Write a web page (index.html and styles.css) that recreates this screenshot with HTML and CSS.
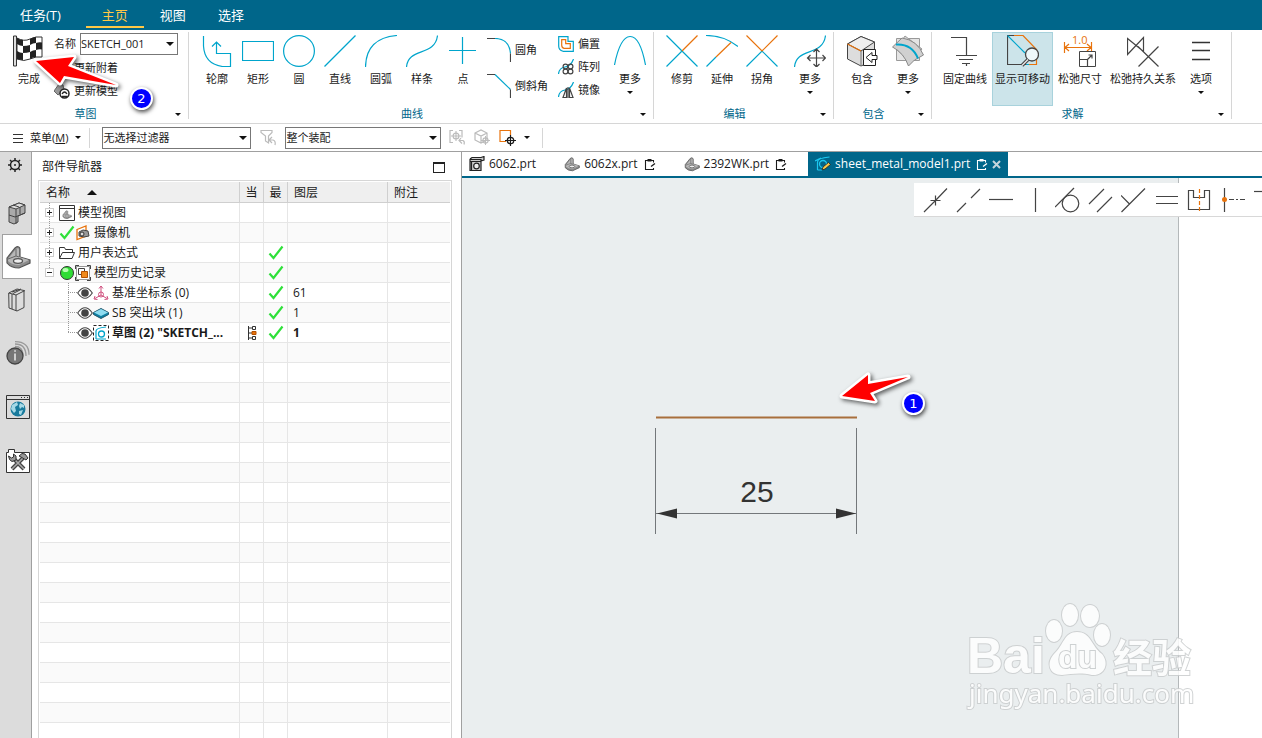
FILE: index.html
```html
<!DOCTYPE html>
<html lang="zh-CN">
<head>
  <meta charset="UTF-8" />
  <title>sheet_metal_model1.prt</title>
  <link rel="stylesheet" href="styles.css">
</head>
<body>
  <!-- shared icons -->
  <svg class="defs" width="0" height="0">
    <symbol id="check" viewBox="0 0 16 16"><path d="M1.500 8.500l4 4.500L14.500 1.500" fill="none" stroke="#2fe03a" stroke-width="2.200"/></symbol>
    <symbol id="eye" viewBox="0 0 16 16"><path d="M.7 8q7.300-10.500 14.600 0q-7.300 10.500-14.600 0z" fill="#fff" stroke="#444" stroke-width="1.100"/><circle cx="8" cy="8" r="3.800" fill="#444"/></symbol>
    <symbol id="part" viewBox="0 0 26 24"><path d="M2 13L10 3q4-3 5 1v8l10 3v3L14 23q-8 0-12-5z" fill="#8c8c8c" stroke="#555" stroke-width="1.200"/><path d="M3 14L11 4q3-2 3 1v7l10 3-10 5q-7 0-11-4z" fill="#b8b8b8"/><path d="M3 14l8-3 3 1M11 11V4" fill="none" stroke="#666"/><ellipse cx="13" cy="16" rx="4.500" ry="2.300" fill="#eee" stroke="#555" stroke-width="1.300"/></symbol>
    <symbol id="edit" viewBox="0 0 12 13"><path d="M9.500 4.500V2.500h-8v9h8V10" fill="none" stroke="currentColor" stroke-width="1.100"/><path d="M3.500 1h4v2.500h-4z" fill="currentColor"/><path d="M7 8.500l4-3" stroke="currentColor" stroke-width="1.300"/></symbol>
    <symbol id="target" viewBox="0 0 12 12"><circle cx="6" cy="6" r="3.500" fill="none" stroke="currentColor" stroke-width="1.400"/><path d="M6 0v12M0 6h12" stroke="currentColor" stroke-width="1.300"/></symbol>
  </svg>

  <nav class="menubar">
    <a href="#">任务(T)</a>
    <a href="#" class="active">主页</a>
    <a href="#">视图</a>
    <a href="#">选择</a>
  </nav>

  <header class="ribbon">
    <section class="group g-sketch">
      <div class="tools">
        <button class="tool">
          <svg width="32" height="32" viewBox="0 0 32 32">
            <path d="M.5 1h3v30h-3z" fill="#ddd" stroke="#333"/>
            <path d="M4 3q7 4 13 1t12-2v20q-6-1-12 2T4 24z" fill="#fff" stroke="#333"/>
            <path d="M4 3q3 2 6 2v6q-3 0-6-2zM17 4q3-2 6-2v6q-3 0-6 2zM10 11q4 0 7-1v7q-3 1-7 1zM23 8q3-1 6-.5v7q-3-.5-6 .5zM4 16q3 2 6 2v7q-3 0-6-1zM17 17q3-2 6-2v7q-3 0-6 2z" fill="#222"/>
          </svg>
          <span>完成</span>
        </button>
        <div class="stack sketch-stack">
          <div class="field">
            <label for="sketchName">名称</label>
            <span class="combo"><select id="sketchName"><option>SKETCH_001</option></select></span>
          </div>
          <button class="tool-row"><svg width="16" height="16" viewBox="0 0 16 16"><path d="M1 6l6-4 5 3v5l-6 3-5-3z" fill="#bbb" stroke="#444"/></svg>更新附着</button>
          <button class="tool-row"><svg width="16" height="16" viewBox="0 0 16 16"><path d="M0 8L5 1l4 1 1 5-6 5z" fill="#999" stroke="#666"/><circle cx="10.500" cy="10.500" r="4.500" fill="#fff" stroke="#222" stroke-width="1.500"/><path d="M8 11q2.500-4 5 0M8 13.500h5.500" fill="none" stroke="#222" stroke-width="1.300"/></svg>更新模型</button>
        </div>
      </div>
      <footer><span>草图</span><button class="caret" aria-label="草图"></button></footer>
    </section>

    <section class="group g-curve">
      <div class="tools">
        <button class="tool"><svg width="32" height="32" viewBox="0 0 32 32"><g class="cy"><path d="M2.500 1v10q1 18 19 20.500h8v-13h-14V7M11 11.500l4.500-4.500 4.500 4.500"/></g></svg><span>轮廓</span></button>
        <button class="tool"><svg width="32" height="32" viewBox="0 0 32 32"><path class="cy" d="M.5 6.500h31v19H.5z"/></svg><span>矩形</span></button>
        <button class="tool"><svg width="32" height="32" viewBox="0 0 32 32"><circle class="cy" cx="16" cy="16" r="15.400"/></svg><span>圆</span></button>
        <button class="tool"><svg width="32" height="32" viewBox="0 0 32 32"><path class="cy" d="M.5 31.500L31.500.5"/></svg><span>直线</span></button>
        <button class="tool"><svg width="32" height="32" viewBox="0 0 32 32"><path class="cy" d="M.5 32Q1 3 32 .5"/></svg><span>圆弧</span></button>
        <button class="tool"><svg width="32" height="32" viewBox="0 0 32 32"><path class="cy" d="M.5 32C2 12 29 22 31.500.5"/></svg><span>样条</span></button>
        <button class="tool"><svg width="32" height="32" viewBox="0 0 32 32"><path class="cy" d="M15.500 2v27M2 15.500h27"/></svg><span>点</span></button>
        <div class="stack tall">
          <button class="tool-row"><svg width="24" height="24" viewBox="0 0 24 24"><path class="cy" d="M8 .5q14 0 15.500 15"/><path class="ink" d="M0 .5h8M23.500 15.500V24"/></svg>圆角</button>
          <button class="tool-row"><svg width="24" height="24" viewBox="0 0 24 24"><path class="cy" d="M8 .5l15.500 15"/><path class="ink" d="M0 .5h8M23.500 15.500V24"/></svg>倒斜角</button>
        </div>
        <div class="stack">
          <button class="tool-row"><svg width="16" height="16" viewBox="0 0 16 16"><path class="cy" d="M.7.700h9.300v4.600h5.300v10H5Q.7 14 .7 10z"/><path class="or" d="M3.700 3.700h4v4h4.600v4.600H6q-2.300-.5-2.300-3z"/></svg>偏置</button>
          <button class="tool-row"><svg width="16" height="16" viewBox="0 0 16 16"><path class="cy" d="M.5 15Q1 9 7 8t8.500-8"/><g class="ink"><circle cx="7.500" cy="7.500" r="2.400"/><circle cx="12.500" cy="7.500" r="2.400"/><circle cx="7.500" cy="12.500" r="2.400"/><circle cx="12.500" cy="12.500" r="2.400"/></g></svg>阵列</button>
          <button class="tool-row"><svg width="16" height="16" viewBox="0 0 16 16"><path class="cy" d="M.5 15Q1 9 7 8t8.500-8"/><path class="ink" d="M8.500 6v9.500H5zM11.500 6v9.500h3.500zM10 5v11"/></svg>镜像</button>
        </div>
        <button class="tool more"><svg width="32" height="32" viewBox="0 0 32 32"><path class="cy" d="M.5 30Q6 2 16 1.500T31.500 30"/></svg><span>更多</span></button>
      </div>
      <footer><span>曲线</span><button class="caret" aria-label="曲线"></button></footer>
    </section>

    <section class="group g-edit">
      <div class="tools">
        <button class="tool"><svg width="32" height="32" viewBox="0 0 32 32"><path class="cy" d="M.5.500l31 31M.5 31.500L16 16"/><path class="or" d="M16 16L31.500.5"/></svg><span>修剪</span></button>
        <button class="tool"><svg width="32" height="32" viewBox="0 0 32 32"><path class="cy" d="M0 .5q18 0 32 11M.5 31.500L10 22"/><path class="or" d="M10 22L25 7.500"/></svg><span>延伸</span></button>
        <button class="tool"><svg width="32" height="32" viewBox="0 0 32 32"><path class="cy" d="M.5 31.500L16 16l15.500 15.500"/><path class="or" d="M.5.500L16 16 31.500.5"/></svg><span>拐角</span></button>
        <button class="tool more"><svg width="32" height="32" viewBox="0 0 32 32"><path class="cy" d="M.5 32C2 12 29 22 31.500.5"/><path class="ink" d="M22.500 14v18M13.500 23h18M19.500 17l3-3 3 3M19.500 29l3 3 3-3M16.500 20l-3 3 3 3M28.500 20l3 3-3 3"/></svg><span>更多</span></button>
      </div>
      <footer><span>编辑</span><button class="caret" aria-label="编辑"></button></footer>
    </section>

    <section class="group g-include">
      <div class="tools">
        <button class="tool"><svg width="32" height="32" viewBox="0 0 32 32"><path d="M1.500 9L15 1.500 28.500 7v18L15 31 1.500 24z" fill="#ddd" stroke="#444"/><path d="M1.500 9L15 1.500 28.500 7 15 16z" fill="#eee" stroke="#444"/><path d="M15 16v15" stroke="#777"/><path class="or" d="M1.500 9L15 16"/><path d="M17.500 14.500h12v16h-12z" fill="#fff" stroke="#222"/><path d="M31 20.500h-5v-3l-6 5 6 5v-3h5z" fill="#fff" stroke="#222"/></svg><span>包含</span></button>
        <button class="tool more"><svg width="32" height="32" viewBox="0 0 32 32"><path d="M4.500 3.500h23v22h-23z" fill="#e4e4e4" stroke="#999"/><path d="M13 1l17 13-11 13L4 14z" fill="#d8d8d8" stroke="#999"/><path d="M.5 12L10 3q15 2 21.500 17l-9 5-6 6Q12 18 .5 12z" fill="#d0d0d0" stroke="#888"/><path d="M4 9.500q16-1 22 14" fill="none" stroke="#00a5cc" stroke-width="2"/></svg><span>更多</span></button>
      </div>
      <footer><span>包含</span><button class="caret" aria-label="包含"></button></footer>
    </section>

    <section class="group g-solve">
      <div class="tools">
        <button class="tool"><svg width="32" height="32" viewBox="0 0 32 32"><path class="ink" d="M2 2.500h15.500v18M7 20.500h21M10 24.500h14M13 28.500h8M17.500 28v3"/></svg><span>固定曲线</span></button>
        <button class="tool selected"><svg width="32" height="32" viewBox="0 0 32 32"><path class="ink" d="M15 .5H.5v29H20"/><path class="cy" d="M.5.500L18 18M19 29.500h3"/><path class="or" d="M7 .5h9l13.500 14v15H22"/><circle cx="25" cy="19.500" r="6.500" fill="#eef8fa" stroke="#444" stroke-width="1.300"/><path d="M21 24.500l-6 6" stroke="#444" stroke-width="3.500"/><path d="M21 24.500l-6 6" stroke="#eee" stroke-width="1.300"/></svg><span>显示可移动</span></button>
        <button class="tool"><svg class="spill" width="32" height="32" viewBox="0 0 32 32"><path class="or" d="M.5 7v11M27.500 7v11M1 12.500h26M5 9l-4 3.500L5 16M23 9l4 3.500-4 3.500"/><text x="8" y="9" class="dim-text">1.0</text><path d="M15.500 16.500h16v15h-16z" fill="#fff" stroke="#444"/><path class="ink" d="M15.500 24.500h8v7M23 25l5-5M24.500 20H28v3.500"/></svg><span>松弛尺寸</span></button>
        <button class="tool"><svg width="32" height="32" viewBox="0 0 32 32"><path class="ink" d="M.5 19.500V3.500l16 13v-14zM11 11.500l20.500 20M11.500 31.500l20-20"/></svg><span>松弛持久关系</span></button>
        <button class="tool more"><svg width="32" height="32" viewBox="0 0 32 32"><path d="M7 7.500h18M7 15.500h18M7 24.500h18" stroke="#333" stroke-width="1.500"/></svg><span>选项</span></button>
      </div>
      <footer><span>求解</span><button class="caret" aria-label="求解"></button></footer>
    </section>
  </header>

  <div class="selection-bar">
    <button class="menu-btn"><svg width="10" height="10" viewBox="0 0 10 10"><path d="M0 1.500h10M0 5.500h10M0 9.500h10" stroke="#333"/></svg><span>菜单(<u>M</u>)</span><i class="arrow"></i></button>
    <span class="rule"></span>
    <span class="combo filter"><select aria-label="过滤器"><option>无选择过滤器</option></select></span>
    <button class="icon-btn wide" aria-label="重置过滤器"><svg width="17" height="17" viewBox="0 0 17 17"><path class="off" d="M1 1.500h11v2L8.500 7v7l-3-2V7L1 3.500zM12 8l-3 3 3 3M9 11h4q3 1 2 5"/></svg></button>
    <span class="combo scope"><select aria-label="范围"><option>整个装配</option></select></span>
    <div class="icons">
      <button class="icon-btn off-color" aria-label="捕捉"><svg width="17" height="17" viewBox="0 0 17 17"><path class="off" d="M4 1.500H1v12h3M10 1.500h3v7M12 9l-2 2.500 3 3M10 11.500h4q2 1 1 4"/><use href="#target" x="2" y="2" width="10" height="10"/></svg></button>
      <button class="icon-btn off-color" aria-label="实体"><svg width="17" height="17" viewBox="0 0 17 17"><path class="off" d="M1 4l6-3 6 3v7l-6 3-6-3zM1 4l6 3 6-3M7 7v7"/><use href="#target" x="7" y="7" width="9" height="9"/></svg></button>
      <button class="icon-btn" aria-label="选择方式"><svg width="17" height="17" viewBox="0 0 17 17"><path class="or" d="M7 12.500H1v-11h10.500V6"/><use href="#target" x="6" y="6" width="11" height="11"/></svg></button>
      <i class="arrow"></i>
    </div>
    <span class="rule"></span>
  </div>

  <main class="workspace">
    <aside class="rail">
      <button class="gear" aria-label="设置"><svg width="14" height="14" viewBox="0 0 14 14"><circle cx="7" cy="7" r="4.500" fill="none" stroke="#222" stroke-width="1.500"/><path d="M7 0v3M7 11v3M0 7h3M11 7h3M2 2l2 2M10 10l2 2M2 12l2-2M10 4l2-2" stroke="#222" stroke-width="1.500"/><circle cx="7" cy="7" r="1" fill="#222"/></svg></button>
      <button class="assembly" aria-label="装配导航器"><svg width="18" height="23" viewBox="0 0 18 23"><path d="M1 5l10-4 6 2v8l-7 3v6l-4 2-5-2z" fill="#aaa" stroke="#444"/><path d="M1 5l10-4 6 2-9 4z" fill="#ddd" stroke="#444"/><path d="M8 7v15M1 13l6 2 10-4M12 5v7M5 3l6 2" fill="none" stroke="#444"/></svg></button>
      <button class="current" aria-label="部件导航器"><svg width="26" height="24"><use href="#part"/></svg></button>
      <button aria-label="重用库"><svg width="18" height="24" viewBox="0 0 18 24"><path d="M.7 5L9 1l7 1.500v17L9 23l-8-3z" fill="#ddd" stroke="#444"/><path d="M1 5l7 2 9-4.500M8 7v16M4 6v15M4 4l9-3M5 5.500L12 2" fill="none" stroke="#444"/></svg></button>
      <button class="low first" aria-label="信息"><svg width="24" height="24" viewBox="0 0 24 24"><g fill="none" stroke="#999" stroke-width="1.300"><path d="M9 3q11 0 11 12M9 .7q14 0 14 13M9 5.500q8 0 8 9"/></g><circle cx="9" cy="15" r="8" fill="#777" stroke="#444" stroke-width="1.300"/><path d="M9 12.500v7M8.300 10h1.500" stroke="#eee" fill="none" stroke-width="1.500"/></svg></button>
      <button class="low" aria-label="浏览器"><svg width="24" height="24" viewBox="0 0 24 24"><path d="M.5.500h23v23H.5z" fill="#dcdcdc" stroke="#333"/><path d="M1 4.500h22" stroke="#333"/><path d="M15 2.500h7" stroke="#333" stroke-dasharray="1 2"/><circle cx="12" cy="14" r="7.500" fill="#187a9c"/><path d="M6 10l5-3 1 3-3 2 1 4-2 2-3-4zM14 8l4 2v3l-2-1-2 2-1-3zM13 16l4-1-2 5-2-1z" fill="#a5d8e6"/></svg></button>
      <button class="low" aria-label="工具"><svg width="24" height="24" viewBox="0 0 24 24"><path d="M.5 3.500h2v-3h6v3h15v20H.5z" fill="#fff" stroke="#333"/><path d="M7 9l11 11M17 9L6 20" stroke="#444" stroke-width="4"/><path d="M7 9l11 11M17 9L6 20" stroke="#aaa" stroke-width="1.500"/><path d="M2.500 7l3 2 2-1V5L10 7v4l-4 1.500q-3-1-3.500-5.500zM13 7l3-2.500 3 .5 3 4-2 2-5-3z" fill="#999" stroke="#333"/></svg></button>
    </aside>

    <section class="navigator">
      <div class="panel-title"><span>部件导航器</span><button aria-label="最大化"></button></div>
      <div class="tree">
        <table>
          <colgroup><col class="c-name"><col class="c-flag"><col class="c-flag"><col class="c-layer"><col></colgroup>
          <thead>
            <tr><th>名称 <i class="sort"></i></th><th class="flag">当</th><th class="flag">最</th><th>图层</th><th>附注</th></tr>
          </thead>
          <tbody>
            <tr><td><div class="node"><b class="box plus"></b><svg width="16" height="16" viewBox="0 0 16 16"><path d="M.5.500h15v15H.5zM1 3.500h14" fill="#fff" stroke="#333"/><use href="#part" x="3" y="5" width="10" height="9"/></svg>模型视图</div></td><td></td><td></td><td></td><td></td></tr>
            <tr><td><div class="node"><b class="box plus"></b><svg width="16" height="16"><use href="#check"/></svg><svg width="16" height="16" viewBox="0 0 16 16"><path d="M2 4.500L11 1v10l-9 3.500z" fill="#fff" stroke="#e8730c" stroke-width="1.300"/><path d="M4 7l4-2 5 1 1 5-5 1-5-1z" fill="#999" stroke="#444"/><circle cx="7" cy="9" r="2" fill="#ddd" stroke="#333"/></svg>摄像机</div></td><td></td><td></td><td></td><td></td></tr>
            <tr><td><div class="node"><b class="box plus"></b><svg width="16" height="16" viewBox="0 0 16 16"><path d="M.5 13.500v-11h5l1 2h7v3M.5 13.500l3-6h12l-2.500 6z" fill="#fff" stroke="#333"/></svg>用户表达式</div></td><td></td><td class="flag"><svg width="16" height="16"><use href="#check"/></svg></td><td></td><td></td></tr>
            <tr><td><div class="node last"><b class="box"></b><svg width="16" height="16" viewBox="0 0 16 16"><circle cx="8" cy="8" r="6.500" fill="#2fdc35" stroke="#333"/><ellipse cx="6.500" cy="5" rx="3" ry="2" fill="#b6ffb0"/></svg><svg width="16" height="16" viewBox="0 0 16 16"><path d="M1.500 1.500h13v13h-13z" fill="#fff" stroke="#999"/><path d="M.5 4V.5H4M12 .5h3.500V4M.5 12v3.500H4M12 15.500h3.500V12" fill="none" stroke="#444"/><path d="M3.500 3.500h6v6h-6z" fill="#fff" stroke="#444"/><path d="M6.500 6.500h6v6h-6z" fill="#f08a1d" stroke="#b35000"/></svg>模型历史记录</div></td><td></td><td class="flag"><svg width="16" height="16"><use href="#check"/></svg></td><td></td><td></td></tr>
            <tr><td><div class="node child"><svg width="16" height="16"><use href="#eye"/></svg><svg width="16" height="16" viewBox="0 0 16 16"><g fill="none" stroke="#d0517f"><path d="M8 10V1M6 3.500L8 1l2 2.500M8 10l-6 3.500M8 10l6 3.500M4.500 14.500L1 14l1-3M11.500 14.500L15 14l-1-3"/><circle cx="8" cy="9.500" r="2.500"/></g></svg>基准坐标系 (0)</div></td><td></td><td class="flag"><svg width="16" height="16"><use href="#check"/></svg></td><td>61</td><td></td></tr>
            <tr><td><div class="node child"><svg width="16" height="16"><use href="#eye"/></svg><svg width="16" height="16" viewBox="0 0 16 16"><path d="M.5 7.500v2L8 13.500l7.500-4v-2L8 3.500z" fill="#0d7fa3" stroke="#24566a"/><path d="M1 7.500l7-3.500 7 3.500-7 3.500z" fill="#8fdcf0"/></svg>SB 突出块 (1)</div></td><td></td><td class="flag"><svg width="16" height="16"><use href="#check"/></svg></td><td>1</td><td></td></tr>
            <tr class="bold"><td><div class="node child last"><svg width="16" height="16"><use href="#eye"/></svg><svg width="16" height="16" viewBox="0 0 16 16"><path d="M.5.500h15v15H.5z" fill="none" stroke="#222" stroke-dasharray="3 2"/><path d="M3 14V6q0-3 10-4M3 14h10" fill="none" stroke="#00a5cc" stroke-width="1.200"/><circle cx="8.500" cy="9" r="3" fill="none" stroke="#00a5cc" stroke-width="1.300"/></svg><span>草图 (2) "SKETCH_...</span></div></td><td class="flag"><svg width="10" height="16" viewBox="0 0 10 16"><path d="M1.500 1v14M1.500 3H5M1.500 8H5M1.500 13H5" stroke="#333" fill="none"/><path d="M5.500 1.500h3v3h-3zM5.500 11.500h3v3h-3z" fill="#fff" stroke="#333"/><path d="M5 6.500h4v3H5z" fill="#e8730c" stroke="#b35000"/></svg></td><td class="flag"><svg width="16" height="16"><use href="#check"/></svg></td><td>1</td><td></td></tr>
            <tr><td></td><td></td><td></td><td></td><td></td></tr>
            <tr><td></td><td></td><td></td><td></td><td></td></tr>
            <tr><td></td><td></td><td></td><td></td><td></td></tr>
            <tr><td></td><td></td><td></td><td></td><td></td></tr>
            <tr><td></td><td></td><td></td><td></td><td></td></tr>
            <tr><td></td><td></td><td></td><td></td><td></td></tr>
            <tr><td></td><td></td><td></td><td></td><td></td></tr>
            <tr><td></td><td></td><td></td><td></td><td></td></tr>
            <tr><td></td><td></td><td></td><td></td><td></td></tr>
            <tr><td></td><td></td><td></td><td></td><td></td></tr>
            <tr><td></td><td></td><td></td><td></td><td></td></tr>
            <tr><td></td><td></td><td></td><td></td><td></td></tr>
            <tr><td></td><td></td><td></td><td></td><td></td></tr>
            <tr><td></td><td></td><td></td><td></td><td></td></tr>
            <tr><td></td><td></td><td></td><td></td><td></td></tr>
            <tr><td></td><td></td><td></td><td></td><td></td></tr>
            <tr><td></td><td></td><td></td><td></td><td></td></tr>
            <tr><td></td><td></td><td></td><td></td><td></td></tr>
            <tr><td></td><td></td><td></td><td></td><td></td></tr>
            <tr><td></td><td></td><td></td><td></td><td></td></tr>
          </tbody>
        </table>
      </div>
    </section>

    <section class="editor">
      <div class="tabs">
        <button class="tab"><svg width="16" height="16" viewBox="0 0 16 16"><path d="M1 3.500h11v11H1zM1 5.500h11M2.500 5v9M1 3l2-1.500h9L15 .5V4l-3 1" fill="#ccc" stroke="#222" stroke-width="1.200"/><circle cx="7.500" cy="10" r="2.800" fill="#eee" stroke="#222" stroke-width="1.200"/></svg>6062.prt</button>
        <button class="tab"><svg width="16" height="16"><use href="#part"/></svg>6062x.prt<svg class="edit" width="12" height="13"><use href="#edit"/></svg></button>
        <button class="tab"><svg width="16" height="16"><use href="#part"/></svg>2392WK.prt<svg class="edit" width="12" height="13"><use href="#edit"/></svg></button>
        <button class="tab active"><svg width="16" height="16" viewBox="0 0 16 16"><path d="M2.500 14V6q0-4 12-5M0 5l6-3M2.500 14h5" fill="none" stroke="#1cc8f0" stroke-width="1.200"/><circle cx="8" cy="8" r="3.500" fill="none" stroke="#1cc8f0" stroke-width="1.300"/><path d="M7 14l1-3 5.500-4.500 2 2L10 13z" fill="#f7c948" stroke="#222" stroke-width=".8"/></svg>sheet_metal_model1.prt<svg class="edit" width="12" height="13"><use href="#edit"/></svg><svg width="9" height="9" viewBox="0 0 9 9"><path d="M1 1l7 7M8 1L1 8" stroke="#c5d5dc" stroke-width="2"/></svg></button>
      </div>

      <div class="viewport">
        <div class="model"></div>
        <div class="margin"></div>

        <div class="constraints">
          <button aria-label="重合"><svg width="26" height="26" viewBox="0 0 26 26"><path class="ink" d="M1 25L12.500 13.500M12.500 13.500L24 1.500M7.500 13.500h5v5M12.500 8.500v5h5"/></svg></button>
          <button aria-label="共线"><svg width="26" height="26" viewBox="0 0 26 26"><path class="ink" d="M1 25l9-9M15 11l9-9"/></svg></button>
          <button aria-label="水平"><svg width="26" height="26" viewBox="0 0 26 26"><path class="ink" d="M0 12.500h24"/></svg></button>
          <button aria-label="竖直"><svg width="26" height="26" viewBox="0 0 26 26"><path class="ink" d="M13.500 1v24"/></svg></button>
          <button aria-label="相切"><svg width="26" height="26" viewBox="0 0 26 26"><path class="ink" d="M0 20L19 1"/><circle class="ink" cx="15.500" cy="16.500" r="8.300"/></svg></button>
          <button aria-label="平行"><svg width="26" height="26" viewBox="0 0 26 26"><path class="ink" d="M1 17L16 2M9 25l15-15"/></svg></button>
          <button aria-label="垂直"><svg width="26" height="26" viewBox="0 0 26 26"><path class="ink" d="M.5 25L24 1.500M0 8.500l8.500 8.500"/></svg></button>
          <button aria-label="等长"><svg width="26" height="26" viewBox="0 0 26 26"><path class="ink" d="M2 9.500h22M2 16.500h22"/></svg></button>
          <button aria-label="对称"><svg width="26" height="26" viewBox="0 0 26 26"><path class="ink" d="M1.500 3.500h5v7h11v-7h5v19h-21z"/><path class="or" d="M12.500 2v22" stroke-dasharray="4 2"/></svg></button>
          <button aria-label="点在线上"><svg width="26" height="26" viewBox="0 0 26 26"><path class="ink" d="M4.500 1v24"/><path class="ink" d="M9 12.500h16" stroke-dasharray="5 2 2 2"/><circle cx="4.500" cy="12.500" r="2.500" fill="#e8730c"/></svg></button>
          <button aria-label="更多约束"><svg width="26" height="26" viewBox="0 0 26 26"><path class="ink" d="M1 4.500h25"/></svg></button>
        </div>

        <svg class="dimension" width="220" height="130" viewBox="0 0 220 130">
          <path d="M6 7.500h201" stroke="#a86f3c" stroke-width="2"/>
          <path d="M5.500 18v106M206.500 18v106M6 103.500h200" stroke="#73777a"/>
          <path d="M7 103.500l20-5v10zM206 103.500l-20-5v10z" fill="#333"/>
          <text x="107" y="92" text-anchor="middle">25</text>
        </svg>

        <svg class="watermark" width="240" height="120" viewBox="0 0 240 120">
          <g>
            <ellipse cx="92" cy="33" rx="8" ry="11"/><ellipse cx="108" cy="17" rx="8" ry="11"/><ellipse cx="128" cy="18" rx="9" ry="11"/><ellipse cx="140" cy="37" rx="8" ry="11"/>
            <path d="M115 34c14 0 14 14 25 22 8 10 2 22-10 21-12-3-20-1-30 0-13 0-16-12-8-21 10-9 10-22 23-22z"/>
            <text x="5" y="75" class="wm-big">Bai</text>
            <text x="96" y="70" class="wm-du">du</text>
            <text x="151" y="74" class="wm-cn">经验</text>
            <text x="7" y="105" class="wm-url">jingyan.baidu.com</text>
          </g>
        </svg>

        <svg class="pointer one" width="80" height="40" viewBox="0 0 80 40"><path d="M6 26L32 5v9l40-7-38 16 5 8z"/></svg>
        <span class="badge one">1</span>
      </div>
    </section>
  </main>

  <svg class="pointer two" width="100" height="50" viewBox="0 0 100 50"><path d="M6 11l38-4-6 9 48 19-52-9-4 7z"/></svg>
  <span class="badge two">2</span>
</body>
</html>
```
FILE: styles.css
```css
:root {
  --brand: #00668a;
  --line: #d6d6d6;
  --edge: #a0a0a0;
  --ink: #444;
  --cyan: #00a5cc;
  --orange: #e8730c;
}

* {
  box-sizing: border-box;
}

body {
  margin: 0;
  height: 100vh;
  display: flex;
  flex-direction: column;
  position: relative;
  overflow: hidden;
  background: #fff;
  color: #1a1a1a;
  font-family: "Open Sans", "Noto Sans CJK SC", sans-serif;
  font-size: 11px;
  line-height: 16px;
}

button {
  padding: 0;
  border: 0;
  background: none;
  color: inherit;
  font: inherit;
  cursor: pointer;
}

svg {
  display: block;
  flex: none;
}

.defs {
  position: absolute;
}

.spill {
  overflow: visible;
}

.cy, .or, .ink, .off {
  fill: none;
  stroke: var(--cyan);
  stroke-width: 1.2;
}

.or {
  stroke: var(--orange);
}

.ink {
  stroke: var(--ink);
}

.off {
  stroke: #bbb;
}

/* top menu */
.menubar {
  display: flex;
  flex: none;
  height: 30px;
  padding-left: 8px;
  background: var(--brand);
  font-size: 13px;
}

.menubar a {
  display: flex;
  align-items: center;
  padding: 0 16px;
  color: #fff;
  text-decoration: none;
}

.menubar a:first-child {
  padding: 0 25px 0 12px;
}

.menubar a.active {
  color: #ffc846;
  box-shadow: inset 0 -2px #ffc846;
  height: 28px;
  padding-top: 2px;
}

/* ribbon */
.ribbon {
  display: flex;
  flex: none;
  height: 94px;
  padding: 2px 0 4px;
  border-bottom: 1px solid var(--line);
}

.group {
  display: flex;
  flex-direction: column;
  border-right: 1px solid var(--line);
}

.g-sketch { width: 189px; padding-left: 9px; }
.g-curve { width: 465px; padding-left: 8px; }
.g-edit { width: 180px; padding-left: 8px; }
.g-include { width: 98px; padding-left: 8px; }
.g-solve { width: 300px; padding-left: 8px; }

.tools {
  display: flex;
  flex: 1;
}

.tool {
  display: flex;
  flex-direction: column;
  align-items: center;
  width: 40px;
  height: 74px;
  padding-top: 3px;
  gap: 4px;
  white-space: nowrap;
}

.g-curve .tools {
  gap: 1px;
}

.g-include .tools {
  gap: 6px;
}

.g-solve .tool {
  width: auto;
  padding-left: 3px;
  padding-right: 3px;
}

.g-solve .tools {
  gap: 2px;
}

.g-solve .more {
  padding: 3px 0 0 4px;
}

.tool.selected {
  background: #cce4ea;
  outline: 1px solid #a8d2dc;
  outline-offset: -1px;
}

.more::after, .arrow, .caret::before, .combo::after {
  content: "";
  width: 0;
  border: 3px solid transparent;
  border-top-color: #111;
  border-bottom: 0;
}

.g-edit .more {
  margin-left: 8px;
}

.g-curve .more {
  margin-left: 3px;
}

.group footer {
  display: grid;
  grid-template-columns: 1fr 20px;
  align-items: center;
  margin-left: -6px;
  text-align: center;
  color: var(--brand);
}

.caret {
  display: grid;
  place-items: center;
}

.stack {
  display: flex;
  flex-direction: column;
  width: 48px;
}

.sketch-stack {
  width: auto;
  padding-left: 5px;
}

.tool-row {
  display: flex;
  align-items: center;
  height: 23px;
  gap: 4px;
  white-space: nowrap;
}

.tall {
  width: 70px;
  margin-left: 3px;
}

.tall .tool-row {
  height: 36px;
}

.field {
  display: flex;
  align-items: center;
  height: 24px;
  gap: 4px;
}

.combo {
  position: relative;
  width: 98px;
}

.combo::after {
  position: absolute;
  right: 4px;
  top: 9px;
  border-width: 4px 4px 0;
  pointer-events: none;
}

.combo select {
  display: block;
  appearance: none;
  width: 100%;
  height: 22px;
  padding: 0;
  border: 1px solid #777;
  border-radius: 0;
  background: #fff;
  color: inherit;
  font: inherit;
}

.dim-text {
  fill: var(--orange);
  font-size: 11px;
}

/* selection bar */
.selection-bar {
  display: flex;
  align-items: center;
  flex: none;
  height: 28px;
  padding-left: 13px;
  border-bottom: 1px solid var(--edge);
}

.menu-btn {
  display: flex;
  align-items: center;
  gap: 7px;
}

.rule {
  width: 1px;
  height: 20px;
  margin: 0 12px 0 8px;
  background: var(--line);
}

.filter {
  width: 149px;
}

.scope {
  width: 156px;
}

.icon-btn.wide {
  width: 34px;
  display: grid;
  place-items: center;
}

.icons {
  display: flex;
  align-items: center;
  gap: 8px;
  padding: 0 4px 0 8px;
}

.off-color {
  color: #bbb;
}

/* lower area */
.workspace {
  display: flex;
  flex: 1;
  min-height: 0;
}

.rail {
  display: flex;
  flex-direction: column;
  flex: none;
  width: 32px;
  background: #dcdcdc;
  border-right: 1px solid var(--edge);
}

.rail button {
  display: grid;
  place-items: center;
  flex: none;
  height: 42px;
  padding-left: 3px;
}

.rail .gear {
  height: 26px;
  padding: 0 2px 0 0;
}

.rail .assembly {
  margin-top: 14px;
}

.rail .current {
  height: 45px;
  margin: 0 -1px 0 2px;
  padding: 0;
  background: #fff;
  border: 1px solid var(--edge);
  border-right: 0;
}

.rail .low {
  height: 54px;
  padding-left: 4px;
}

.rail .first {
  margin-top: 5px;
}

.navigator {
  display: flex;
  flex-direction: column;
  flex: none;
  width: 430px;
  padding: 0 9px 0 6px;
  border-right: 1px solid var(--edge);
  font-size: 12px;
}

.panel-title {
  display: flex;
  justify-content: space-between;
  align-items: center;
  flex: none;
  height: 28px;
  padding: 2px 7px 0 4px;
}

.panel-title button {
  width: 12px;
  height: 11px;
  border: 1px solid #222;
  border-top-width: 2px;
}

.tree {
  flex: 1;
  min-height: 0;
  overflow: hidden;
  border: 1px solid var(--line);
  border-bottom: 0;
  padding: 1px 1px 0;
}

.tree table {
  width: 100%;
  table-layout: fixed;
  border-collapse: separate;
  border-spacing: 0;
}

.c-name { width: 200px; }
.c-flag { width: 24px; }
.c-layer { width: 100px; }

th, td {
  height: 20px;
  padding: 0 0 0 5px;
  border-right: 1px solid #e6e6e6;
  border-bottom: 1px solid #e6e6e6;
  text-align: left;
  line-height: 19px;
}

th {
  height: 21px;
  padding-left: 6px;
  background: #efefef;
  border-color: #cfcfcf;
  font-weight: normal;
}

th:last-child, td:last-child {
  border-right: 0;
}

tbody tr:nth-child(even) {
  background: #fafafa;
}

.flag {
  padding: 0;
  text-align: center;
}

.flag svg {
  margin: 0 auto;
}

.sort {
  display: inline-block;
  margin-left: 14px;
  border: 5px solid transparent;
  border-top: 0;
  border-bottom-color: #111;
  vertical-align: 2px;
}

.node {
  display: flex;
  align-items: center;
  height: 19px;
  white-space: nowrap;
}

.node svg:last-of-type {
  margin-right: 3px;
}

.box {
  width: 9px;
  height: 9px;
  margin-right: 5px;
  border: 1px solid #ccc;
  background: linear-gradient(#222, #222) center / 5px 1px no-repeat, #fff;
}

.box.plus {
  background: linear-gradient(#222, #222) center / 5px 1px no-repeat, linear-gradient(#222, #222) center / 1px 5px no-repeat, #fff;
}

.node:not(.child) {
  background: repeating-linear-gradient(#999 0 1px, transparent 1px 2px) 4px 0 / 1px 100% no-repeat;
}

.node.last:not(.child) {
  background-size: 1px 9px;
}

/* dotted branch to the child rows */
.child::before {
  content: "";
  align-self: stretch;
  width: 9px;
  margin-left: 23px;
  background:
    repeating-linear-gradient(#999 0 1px, transparent 1px 2px) 0 0 / 1px 100% no-repeat,
    repeating-linear-gradient(90deg, #999 0 1px, transparent 1px 2px) 0 9px / 100% 1px no-repeat;
}

.child.last::before {
  background-size: 1px 10px, 100% 1px;
}

.bold {
  font-weight: bold;
}

/* documents */
.editor {
  display: flex;
  flex-direction: column;
  flex: 1;
  min-width: 0;
}

.tabs {
  display: flex;
  flex: none;
  height: 26px;
  border-bottom: 2px solid var(--brand);
  font-size: 12px;
}

.tab {
  display: flex;
  align-items: center;
  padding: 0 21px 0 7px;
  gap: 4px;
  white-space: nowrap;
}

.tab .edit {
  margin-left: 2px;
}

.tab.active {
  padding: 0 7px;
  background: var(--brand);
  color: #fff;
}

.viewport {
  position: relative;
  display: flex;
  flex: 1;
  overflow: hidden;
}

.model {
  flex: 1;
  background: #eaeeef;
  border-right: 1px solid #b4b8ba;
}

.margin {
  width: 83px;
}

.constraints {
  position: absolute;
  top: 5px;
  right: 0;
  display: flex;
  align-items: center;
  gap: 7px;
  width: 348px;
  height: 34px;
  padding-left: 9px;
  background: #fff;
  border-bottom: 1px solid #d8d8d8;
}

.dimension {
  position: absolute;
  left: 188px;
  top: 232px;
}

.dimension text {
  fill: #333;
  font-family: "Liberation Sans", sans-serif;
  font-size: 30px;
}

.watermark {
  position: absolute;
  right: 60px;
  bottom: 20px;
}

.watermark g {
  fill: #fff;
  stroke: #c9cccd;
  stroke-width: 2;
  paint-order: stroke;
  opacity: .85;
}

.wm-big {
  font: bold 50px "Liberation Sans", sans-serif;
}

.wm-du {
  font: bold 32px "Liberation Sans", sans-serif;
}

.wm-cn {
  font: bold 39px "Noto Sans CJK SC", sans-serif;
}

.wm-url {
  font: 26px "Noto Sans", sans-serif;
}

/* numbered step markers */
.pointer {
  position: absolute;
  fill: #f00;
  stroke: #fff;
  stroke-width: 5;
  stroke-linejoin: round;
  paint-order: stroke;
  filter: drop-shadow(2px 2px 2px rgba(0, 0, 0, .6));
}

.badge {
  position: absolute;
  display: grid;
  place-items: center;
  width: 23px;
  height: 23px;
  border: 2px solid #fff;
  border-radius: 50%;
  background: #00f;
  color: #fff;
  font: 13px "DejaVu Sans", sans-serif;
  box-shadow: 1px 2px 4px rgba(0, 0, 0, .7);
}

.pointer.one { left: 374px; top: 192px; }
.badge.one { left: 440px; top: 214px; }
.pointer.two { left: 30px; top: 50px; }
.badge.two { left: 130px; top: 87px; }
```
